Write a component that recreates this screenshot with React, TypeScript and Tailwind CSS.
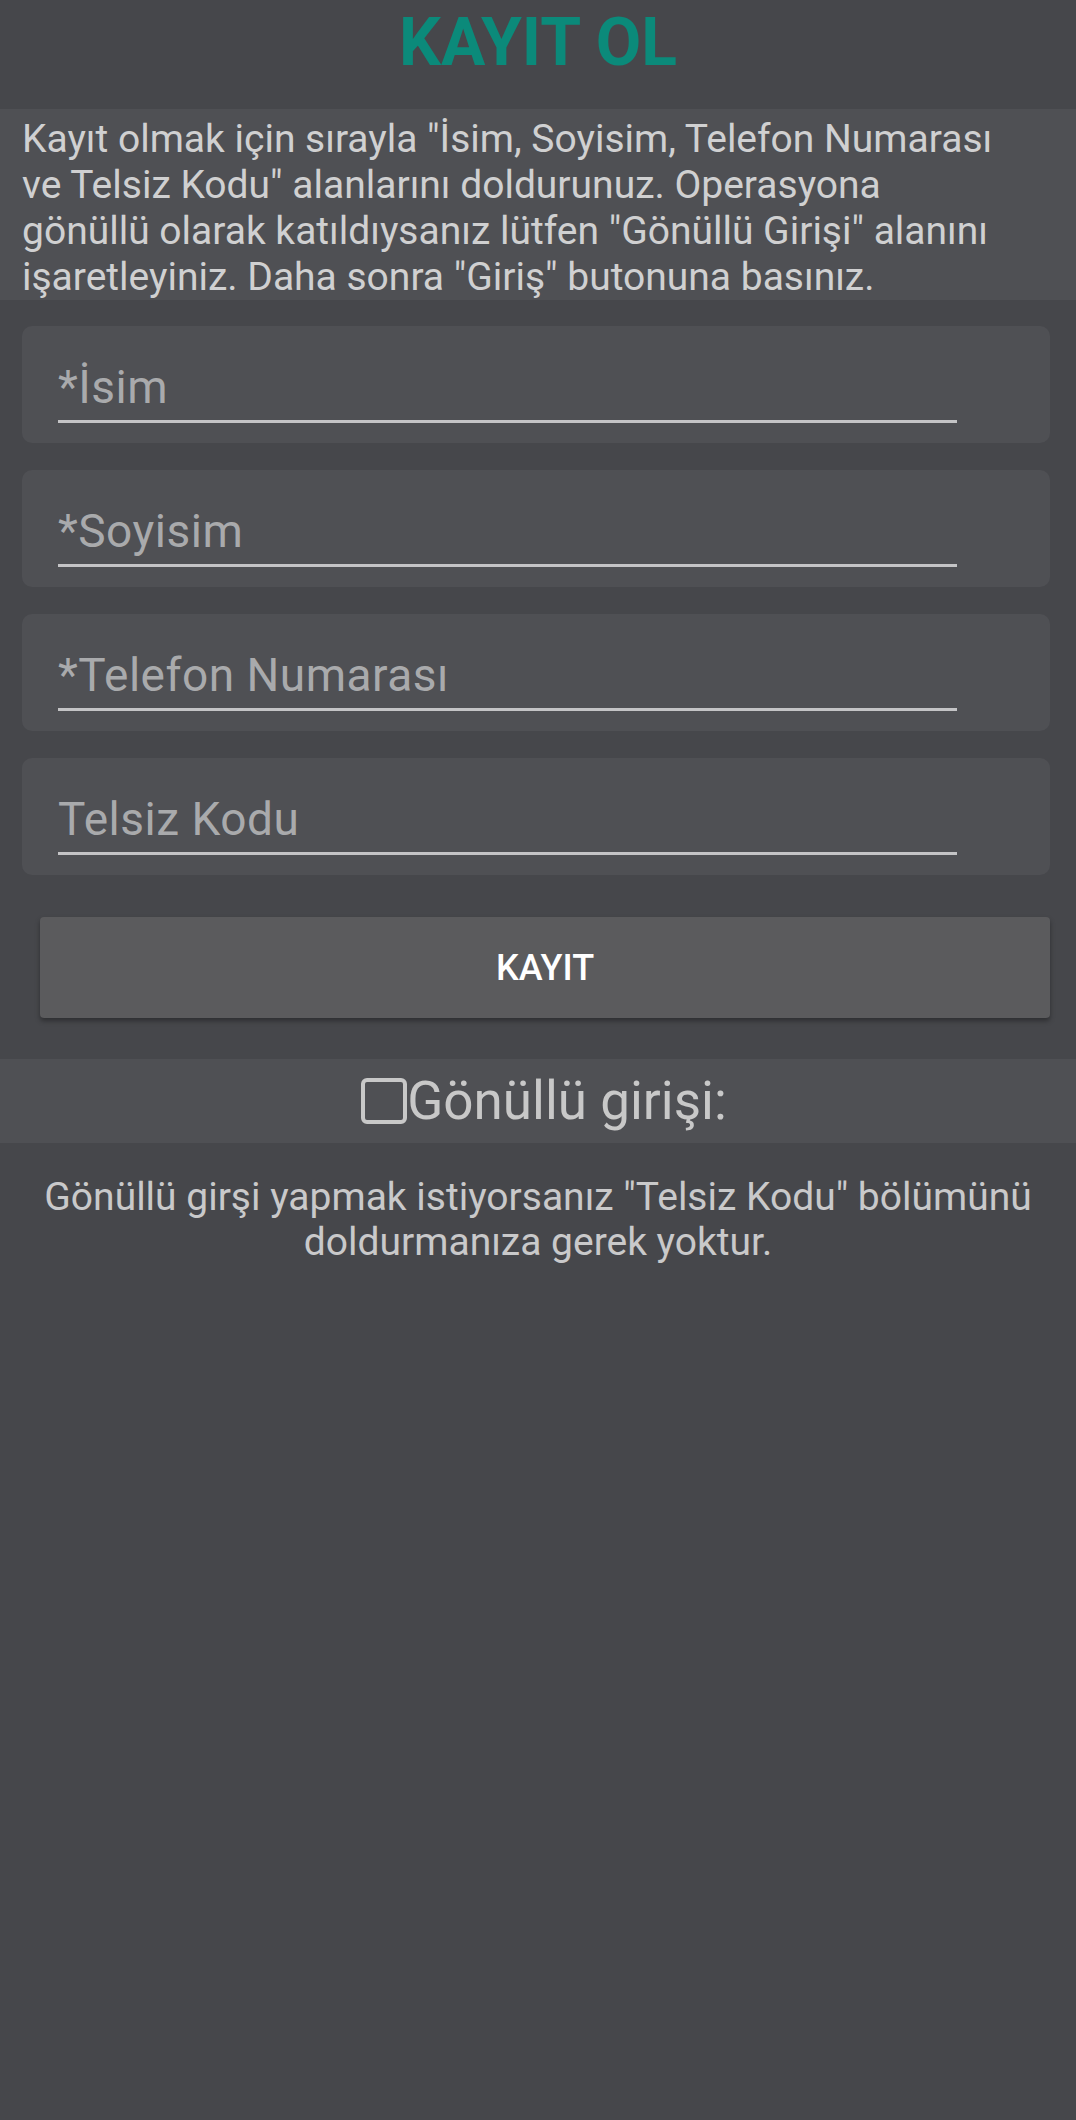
import React from 'react';

const FIELDS = ['*İsim', '*Soyisim', '*Telefon Numarası', 'Telsiz Kodu'];

const App: React.FC = () => {
  return (
    <div className="min-h-[2120px] w-full bg-[#46474b] font-['Roboto','Noto_Sans',sans-serif]">
      {/* Title */}
      <div className="flex h-[109px] justify-center pt-[4px]">
        <h1 className="text-[66px] font-bold leading-[77px] text-[#0b8a7a]">KAYIT OL</h1>
      </div>

      {/* Instructions */}
      <div className="h-[191px] bg-[#4f5054] pl-[22px] pr-[73px] pt-[7px]">
        <p className="text-[39px] leading-[46px] text-[#d0d0d1]">
          Kayıt olmak için sırayla "İsim, Soyisim, Telefon Numarası ve Telsiz Kodu" alanlarını doldurunuz. Operasyona gönüllü olarak katıldıysanız lütfen "Gönüllü Girişi" alanını işaretleyiniz. Daha sonra "Giriş" butonuna basınız.
        </p>
      </div>

      {/* Form */}
      <div className="flex flex-col gap-[27px] pl-[22px] pr-[26px] pt-[26px]">
        {FIELDS.map((f) => (
          <div key={f} className="h-[117px] rounded-[10px] bg-[#4f5054] pl-[36px] pr-[93px] pt-[35px]">
            <input
              placeholder={f}
              className="block w-full border-b-[3px] border-[#c4c4c6] bg-transparent pb-[7px] text-[46px] leading-[52px] tracking-[0.5px] text-[#d0d0d0] outline-none placeholder:text-[#a9aaac]"
            />
          </div>
        ))}
      </div>

      <div className="pl-[40px] pr-[26px] pt-[42px]">
        <button className="flex h-[101px] w-full items-center justify-center rounded-[4px] bg-[#5b5b5d] text-[36px] font-medium text-white shadow-[0_3px_5px_rgba(0,0,0,0.35)]">
          KAYIT
        </button>
      </div>

      {/* Volunteer checkbox */}
      <div className="mt-[41px] flex h-[84px] items-center justify-center bg-[#4f5054] pl-[12px]">
        <span className="h-[46px] w-[46px] rounded-[6px] border-[4px] border-[#c8c8c8]" />
        <span className="text-[53px] leading-[62px] text-[#c8c8c8]">Gönüllü girişi:</span>
      </div>

      <p className="px-[30px] pt-[32px] text-center text-[39px] leading-[45px] text-[#c9c9ca]">
        Gönüllü girşi yapmak istiyorsanız "Telsiz Kodu" bölümünü doldurmanıza gerek yoktur.
      </p>
    </div>
  );
};

export default App;
